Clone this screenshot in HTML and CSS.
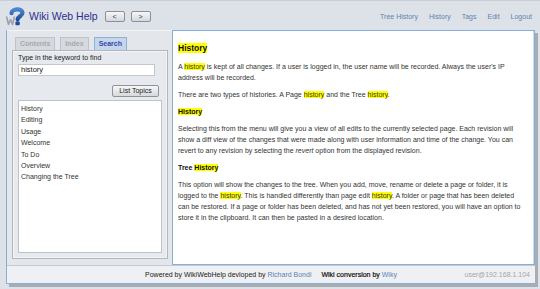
FILE: index.html
```html
<!DOCTYPE html>
<html>
<head>
<meta charset="utf-8">
<link rel="stylesheet" href="styles.css">
</head>
<body>
<div class="page">
  <header class="top">
    <div class="brand">
      <svg class="logo" width="21" height="20" viewBox="0 0 21 20">
        <defs>
          <linearGradient id="g" x1="0" y1="0" x2="0" y2="1">
            <stop offset="0" stop-color="#4d86cc"/>
            <stop offset="1" stop-color="#1c4f9a"/>
          </linearGradient>
        </defs>
        <path d="M6.5 7.2 C6.5 2.5 17.5 1.8 17.5 6.8 C17.5 10.2 12.6 10.4 12.6 13.6" fill="none" stroke="url(#g)" stroke-width="4.2" stroke-linecap="round"/>
        <rect x="10.4" y="15.4" width="4.4" height="3.8" rx="1" fill="#1c4f9a"/>
        <path d="M1.5 10.5 L3.5 18.5 L5.5 13.5 L7.5 18.5 L9.5 10.5" fill="none" stroke="#9aa1aa" stroke-width="1.6" stroke-linejoin="round"/>
      </svg>
      <span class="title">Wiki Web Help</span>
      <button class="navbtn">&lt;</button>
      <button class="navbtn">&gt;</button>
    </div>
    <nav class="links">
      <a>Tree History</a>
      <a>History</a>
      <a>Tags</a>
      <a>Edit</a>
      <a>Logout</a>
    </nav>
  </header>

  <div class="frame">
    <div class="row">
      <aside class="side">
        <div class="tabs">
          <span class="tab">Contents</span>
          <span class="tab">Index</span>
          <span class="tab active">Search</span>
        </div>
        <div class="tabbox">
          <div class="label">Type in the keyword to find</div>
          <div class="input">history</div>
          <div class="btnrow"><button class="listbtn">List Topics</button></div>
          <ul class="results">
            <li>History</li>
            <li>Editing</li>
            <li>Usage</li>
            <li>Welcome</li>
            <li>To Do</li>
            <li>Overview</li>
            <li>Changing the Tree</li>
          </ul>
        </div>
      </aside>
      <main class="content">
        <h1><mark>History</mark></h1>
        <p>A <mark>history</mark> is kept of all changes. If a user is logged in, the user name will be recorded. Always the user's IP address will be recorded.</p>
        <p>There are two types of histories. A Page <mark>history</mark> and the Tree <mark>history</mark>.</p>
        <h2><mark>History</mark></h2>
        <p>Selecting this from the menu will give you a view of all edits to the currently selected page. Each revision will show a diff view of the changes that were made along with user information and time of the change. You can revert to any revision by selecting the <em>revert</em> option from the displayed revision.</p>
        <h2>Tree <mark>History</mark></h2>
        <p>This option will show the changes to the tree. When you add, move, rename or delete a page or folder, it is logged to the <mark>history</mark>. This is handled differently than page edit <mark>history</mark>. A folder or page that has been deleted can be restored. If a page or folder has been deleted, and has not yet been restored, you will have an option to store it in the clipboard. It can then be pasted in a desired location.</p>
      </main>
    </div>
    <footer class="foot">
      <span></span>
      <span class="credits">Powered by WikiWebHelp devloped by <a>Richard Bondi</a><span class="sep"></span><b>Wiki conversion by</b> <a>Wiky</a></span>
      <span class="user">user@192.168.1.104</span>
    </footer>
  </div>
</div>
</body>
</html>
```

FILE: styles.css
```css
html, body {
  margin: 0;
  padding: 0;
}
body {
  width: 540px;
  height: 289px;
  overflow: hidden;
  background: #dde2e9;
  font-family: "Liberation Sans", Arial, sans-serif;
  color: #333;
}
.page {
  width: 540px;
  height: 289px;
  display: flex;
  flex-direction: column;
  border-top: 1px solid #c9ced6;
  box-sizing: border-box;
}
.top {
  height: 29px;
  display: flex;
  align-items: center;
  justify-content: space-between;
  padding: 0 8px 0 5px;
}
.brand {
  display: flex;
  align-items: center;
}
.logo {
  display: block;
  margin-top: 1px;
}
.title {
  font-size: 10.5px;
  color: #2e2e8e;
  margin-left: 3px;
  margin-right: 7px;
  margin-top: 1px;
}
.navbtn {
  width: 20px;
  height: 11px;
  padding: 0;
  margin: 1px 6px 0 0;
  font-family: "Liberation Sans", Arial, sans-serif;
  font-size: 7px;
  line-height: 9px;
  color: #333;
  border: 1px solid #8c9096;
  border-radius: 2px;
  background: linear-gradient(#f6f7f8, #d4d7db);
}
.links {
  display: flex;
  gap: 11px;
  margin-top: 1px;
}
.links a {
  font-size: 7px;
  color: #5f82ab;
}
.frame {
  margin-left: 6px;
  width: 529px;
  height: 254px;
  box-sizing: border-box;
  border-left: 1px solid #86b0d8;
  border-bottom: 1px solid #86b0d8;
  display: flex;
  flex-direction: column;
  box-shadow: 3px 3px 0 #a9adb3;
}
.row {
  display: flex;
  height: 235px;
}
.side {
  width: 165px;
  flex: none;
  background: #e3e7ec;
  border-top: 1px solid #f2f4f6;
  box-sizing: border-box;
  padding: 6px 4px 6px 5px;
  display: flex;
  flex-direction: column;
}
.tabs {
  display: flex;
  gap: 5px;
  padding-left: 3px;
  height: 13px;
}
.tab {
  font-size: 7px;
  font-weight: bold;
  color: #a6a9ae;
  background: #d6d9dd;
  border: 1px solid #bfc3c8;
  border-bottom: none;
  padding: 0 4px;
  line-height: 12px;
}
.tab.active {
  background: #c3d6ec;
  border-color: #8fb0d4;
  color: #3b45a8;
}
.tabbox {
  flex: 1;
  border: 1px solid #b3b7bc;
  background: #e6e9ed;
  padding: 2px 5px 5px 5px;
  display: flex;
  flex-direction: column;
  box-shadow: inset 0 0 0 1px #f3f4f6;
}
.label {
  font-size: 7px;
  color: #222;
  line-height: 10px;
}
.input {
  margin-top: 1px;
  height: 12px;
  width: 137px;
  background: #fff;
  border: 1px solid #c4c8cc;
  box-sizing: border-box;
  font-size: 7.5px;
  line-height: 10px;
  padding-left: 2px;
  color: #222;
}
.btnrow {
  display: flex;
  justify-content: flex-end;
  margin-top: 9px;
  padding-right: 3px;
}
.listbtn {
  height: 12px;
  width: 47px;
  padding: 0;
  font-family: "Liberation Sans", Arial, sans-serif;
  font-size: 7px;
  line-height: 10px;
  color: #222;
  border: 1px solid #8f9398;
  border-radius: 2px;
  background: linear-gradient(#f7f7f8, #d6d9dc);
}
.results {
  list-style: none;
  margin: 3px 0 0 0;
  padding: 2px 2px;
  flex: 1;
  background: #fff;
  border: 1px solid #bfc3c8;
}
.results li {
  font-size: 7px;
  line-height: 11.4px;
  color: #333;
}
.content {
  flex: 1;
  background: #fff;
  border: 1px solid #86b0d8;
  box-shadow: inset -1px 0 0 #c9ddf0;
  padding: 11px 10px 0 5px;
  box-sizing: border-box;
  font-size: 7px;
  line-height: 11px;
  color: #333;
  overflow: hidden;
}
.content h1 {
  font-size: 8.5px;
  font-weight: bold;
  color: #111;
  margin: 0 0 6px 0;
  line-height: 13px;
}
.content h2 {
  font-size: 7px;
  font-weight: bold;
  color: #111;
  margin: 0 0 6px 0;
  line-height: 11px;
}
.content p {
  margin: 0 0 6px 0;
}
mark {
  background: #ffff00;
  color: inherit;
}
.foot {
  flex: 1;
  display: grid;
  grid-template-columns: 1fr auto 1fr;
  align-items: center;
  background: #eef0f3;
  border-top: 1px solid #c6cad0;
  font-size: 7px;
  color: #222;
  padding: 0 5px;
}
.foot a {
  color: #5b82b8;
}
.foot b {
  font-weight: normal;
  color: #111;
  -webkit-text-stroke: 0.2px #111;
}
.sep {
  display: inline-block;
  width: 10px;
}
.user {
  justify-self: end;
  color: #a3a7ad;
}
```
